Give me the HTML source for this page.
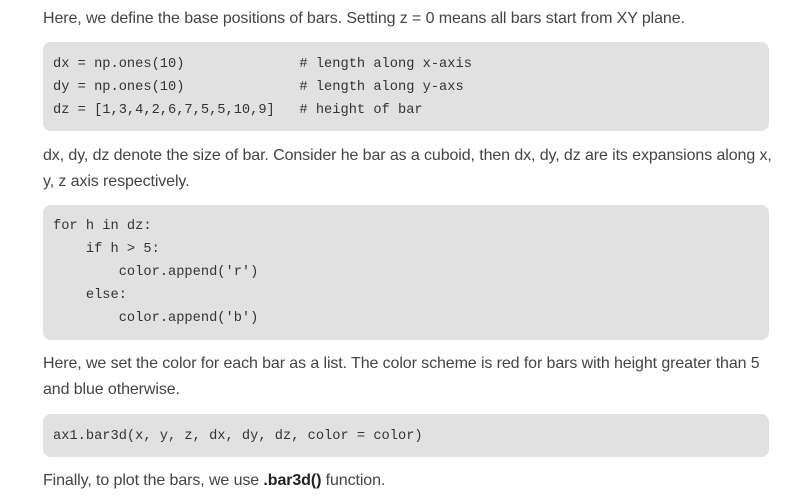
<!DOCTYPE html>
<html><head><style>
body{margin:0;width:798px;height:501px;background:#fff;position:relative;overflow:hidden;font-family:"Liberation Sans",sans-serif;color:#444}
.t{position:absolute;left:43px;font-size:16px;line-height:26px;width:730px;letter-spacing:-0.1px}
.c{position:absolute;left:43px;width:726px;background:#e1e1e1;border-radius:8px}
.c pre{margin:0;position:absolute;left:10px;font-family:"Liberation Mono",monospace;font-size:13.7px;line-height:23px;color:#333}
b{color:#222}
</style></head><body>
<div class="t" style="top:6px">Here, we define the base positions of bars. Setting z = 0 means all bars start from XY plane.</div>
<div class="c" style="top:42px;height:89px"><pre style="top:11px">dx = np.ones(10)              # length along x-axis
dy = np.ones(10)              # length along y-axs
dz = [1,3,4,2,6,7,5,5,10,9]   # height of bar</pre></div>
<div class="t" style="top:143px">dx, dy, dz denote the size of bar. Consider he bar as a cuboid, then dx, dy, dz are its expansions along x,<br>y, z axis respectively.</div>
<div class="c" style="top:205px;height:135px"><pre style="top:10px">for h in dz:
    if h &gt; 5:
        color.append('r')
    else:
        color.append('b')</pre></div>
<div class="t" style="top:351px">Here, we set the color for each bar as a list. The color scheme is red for bars with height greater than 5<br>and blue otherwise.</div>
<div class="c" style="top:414px;height:43px"><pre style="top:11px">ax1.bar3d(x, y, z, dx, dy, dz, color = color)</pre></div>
<div class="t" style="top:468px">Finally, to plot the bars, we use <b>.bar3d()</b> function.</div>
</body></html>
